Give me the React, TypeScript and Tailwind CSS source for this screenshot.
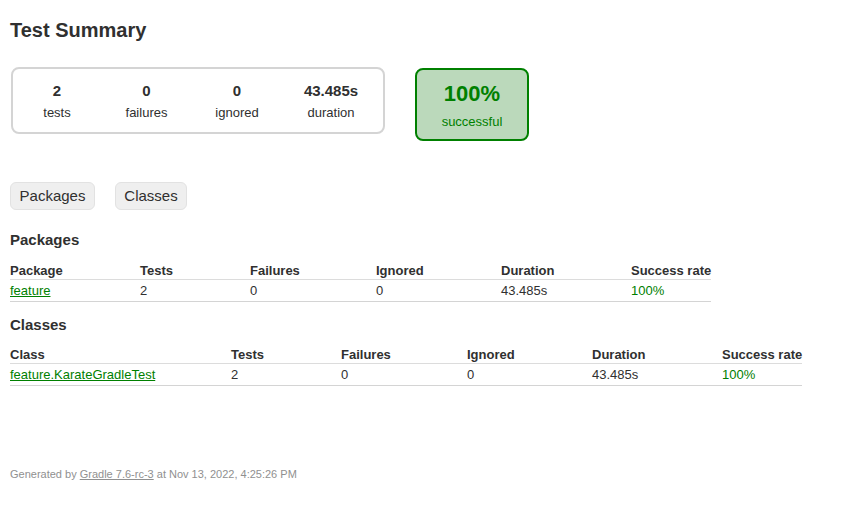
import React from 'react';

type Row = { name: string; tests: string; failures: string; ignored: string; duration: string; rate: string };

const summary = [
  { value: '2', label: 'tests', w: 'w-[88px]' },
  { value: '0', label: 'failures', w: 'w-[91px]' },
  { value: '0', label: 'ignored', w: 'w-[90px]' },
  { value: '43.485s', label: 'duration', w: 'w-[98px]' },
];

const ResultTable: React.FC<{ first: string; firstWidth: string; width: string; rows: Row[]; top: string }> = ({ first, firstWidth, width, rows, top }) => {
  const th = 'text-left font-bold text-[13px] leading-4 whitespace-nowrap pt-[3px] pb-0 border-b border-[#dcdcdc]';
  const td = 'text-left text-[13px] leading-4 whitespace-nowrap pt-[3px] pb-[2px] border-b border-[#d4d4d4]';
  return (
    <table className={`table-fixed border-collapse ${top} ${width}`}>
      <thead>
        <tr>
          <th className={`${th} ${firstWidth}`}>{first}</th>
          <th className={`${th} w-[110px]`}>Tests</th>
          <th className={`${th} w-[126px]`}>Failures</th>
          <th className={`${th} w-[125px]`}>Ignored</th>
          <th className={`${th} w-[130px]`}>Duration</th>
          <th className={`${th} w-[80px]`}>Success rate</th>
        </tr>
      </thead>
      <tbody>
        {rows.map((r) => (
          <tr key={r.name}>
            <td className={td}>
              <a href="#" className="text-[#008000] underline">{r.name}</a>
            </td>
            <td className={td}>{r.tests}</td>
            <td className={td}>{r.failures}</td>
            <td className={td}>{r.ignored}</td>
            <td className={td}>{r.duration}</td>
            <td className={`${td} text-[#008000]`}>{r.rate}</td>
          </tr>
        ))}
      </tbody>
    </table>
  );
};

const App: React.FC = () => {
  return (
    <div className="min-h-[512px] bg-white px-[10px] text-[#303030]" style={{ fontFamily: '"Liberation Sans", Arial, sans-serif' }}>
      <h1 className="pt-[18px] text-[20px] leading-6 font-bold">Test Summary</h1>

      <div className="mt-[25px] flex items-start">
        <div className="ml-[1px] flex rounded-lg border-2 border-[#d4d4d4] pr-[3px]">
          {summary.map((s) => (
            <div key={s.label} className={`${s.w} pt-[13px] pb-[11px] text-center`}>
              <div className="text-[15px] leading-[18px] font-bold">{s.value}</div>
              <div className="mt-[5px] text-[13px] leading-4">{s.label}</div>
            </div>
          ))}
        </div>
        <div className="ml-[30px] mt-[1px] w-[114px] rounded-lg border-2 border-[#008000] bg-[#bbd9bb] pt-[11px] pb-[9px] text-center text-[#008000]">
          <div className="text-[22px] leading-[26px] font-bold">100%</div>
          <div className="mt-[7px] text-[13px] leading-4">successful</div>
        </div>
      </div>

      <div className="mt-[41px] flex gap-[20px]">
        <button className="h-[28px] w-[85px] rounded-md border border-[#e2e2e2] bg-[#efefef] text-[15px] text-[#303030]">Packages</button>
        <button className="h-[28px] w-[72px] rounded-md border border-[#e2e2e2] bg-[#efefef] text-[15px] text-[#303030]">Classes</button>
      </div>

      <h2 className="mt-[21px] text-[15px] leading-[18px] font-bold">Packages</h2>
      <ResultTable
        top="mt-[11px]"
        first="Package"
        firstWidth="w-[130px]"
        width="w-[701px]"
        rows={[{ name: 'feature', tests: '2', failures: '0', ignored: '0', duration: '43.485s', rate: '100%' }]}
      />

      <h2 className="mt-[14px] text-[15px] leading-[18px] font-bold">Classes</h2>
      <ResultTable
        top="mt-[10px]"
        first="Class"
        firstWidth="w-[221px]"
        width="w-[792px]"
        rows={[{ name: 'feature.KarateGradleTest', tests: '2', failures: '0', ignored: '0', duration: '43.485s', rate: '100%' }]}
      />

      <p className="mt-[81px] text-[11px] leading-[14px] text-[#909090]">
        Generated by <a href="#" className="text-[#909090] underline">Gradle 7.6-rc-3</a> at Nov 13, 2022, 4:25:26 PM
      </p>
    </div>
  );
};

export default App;
